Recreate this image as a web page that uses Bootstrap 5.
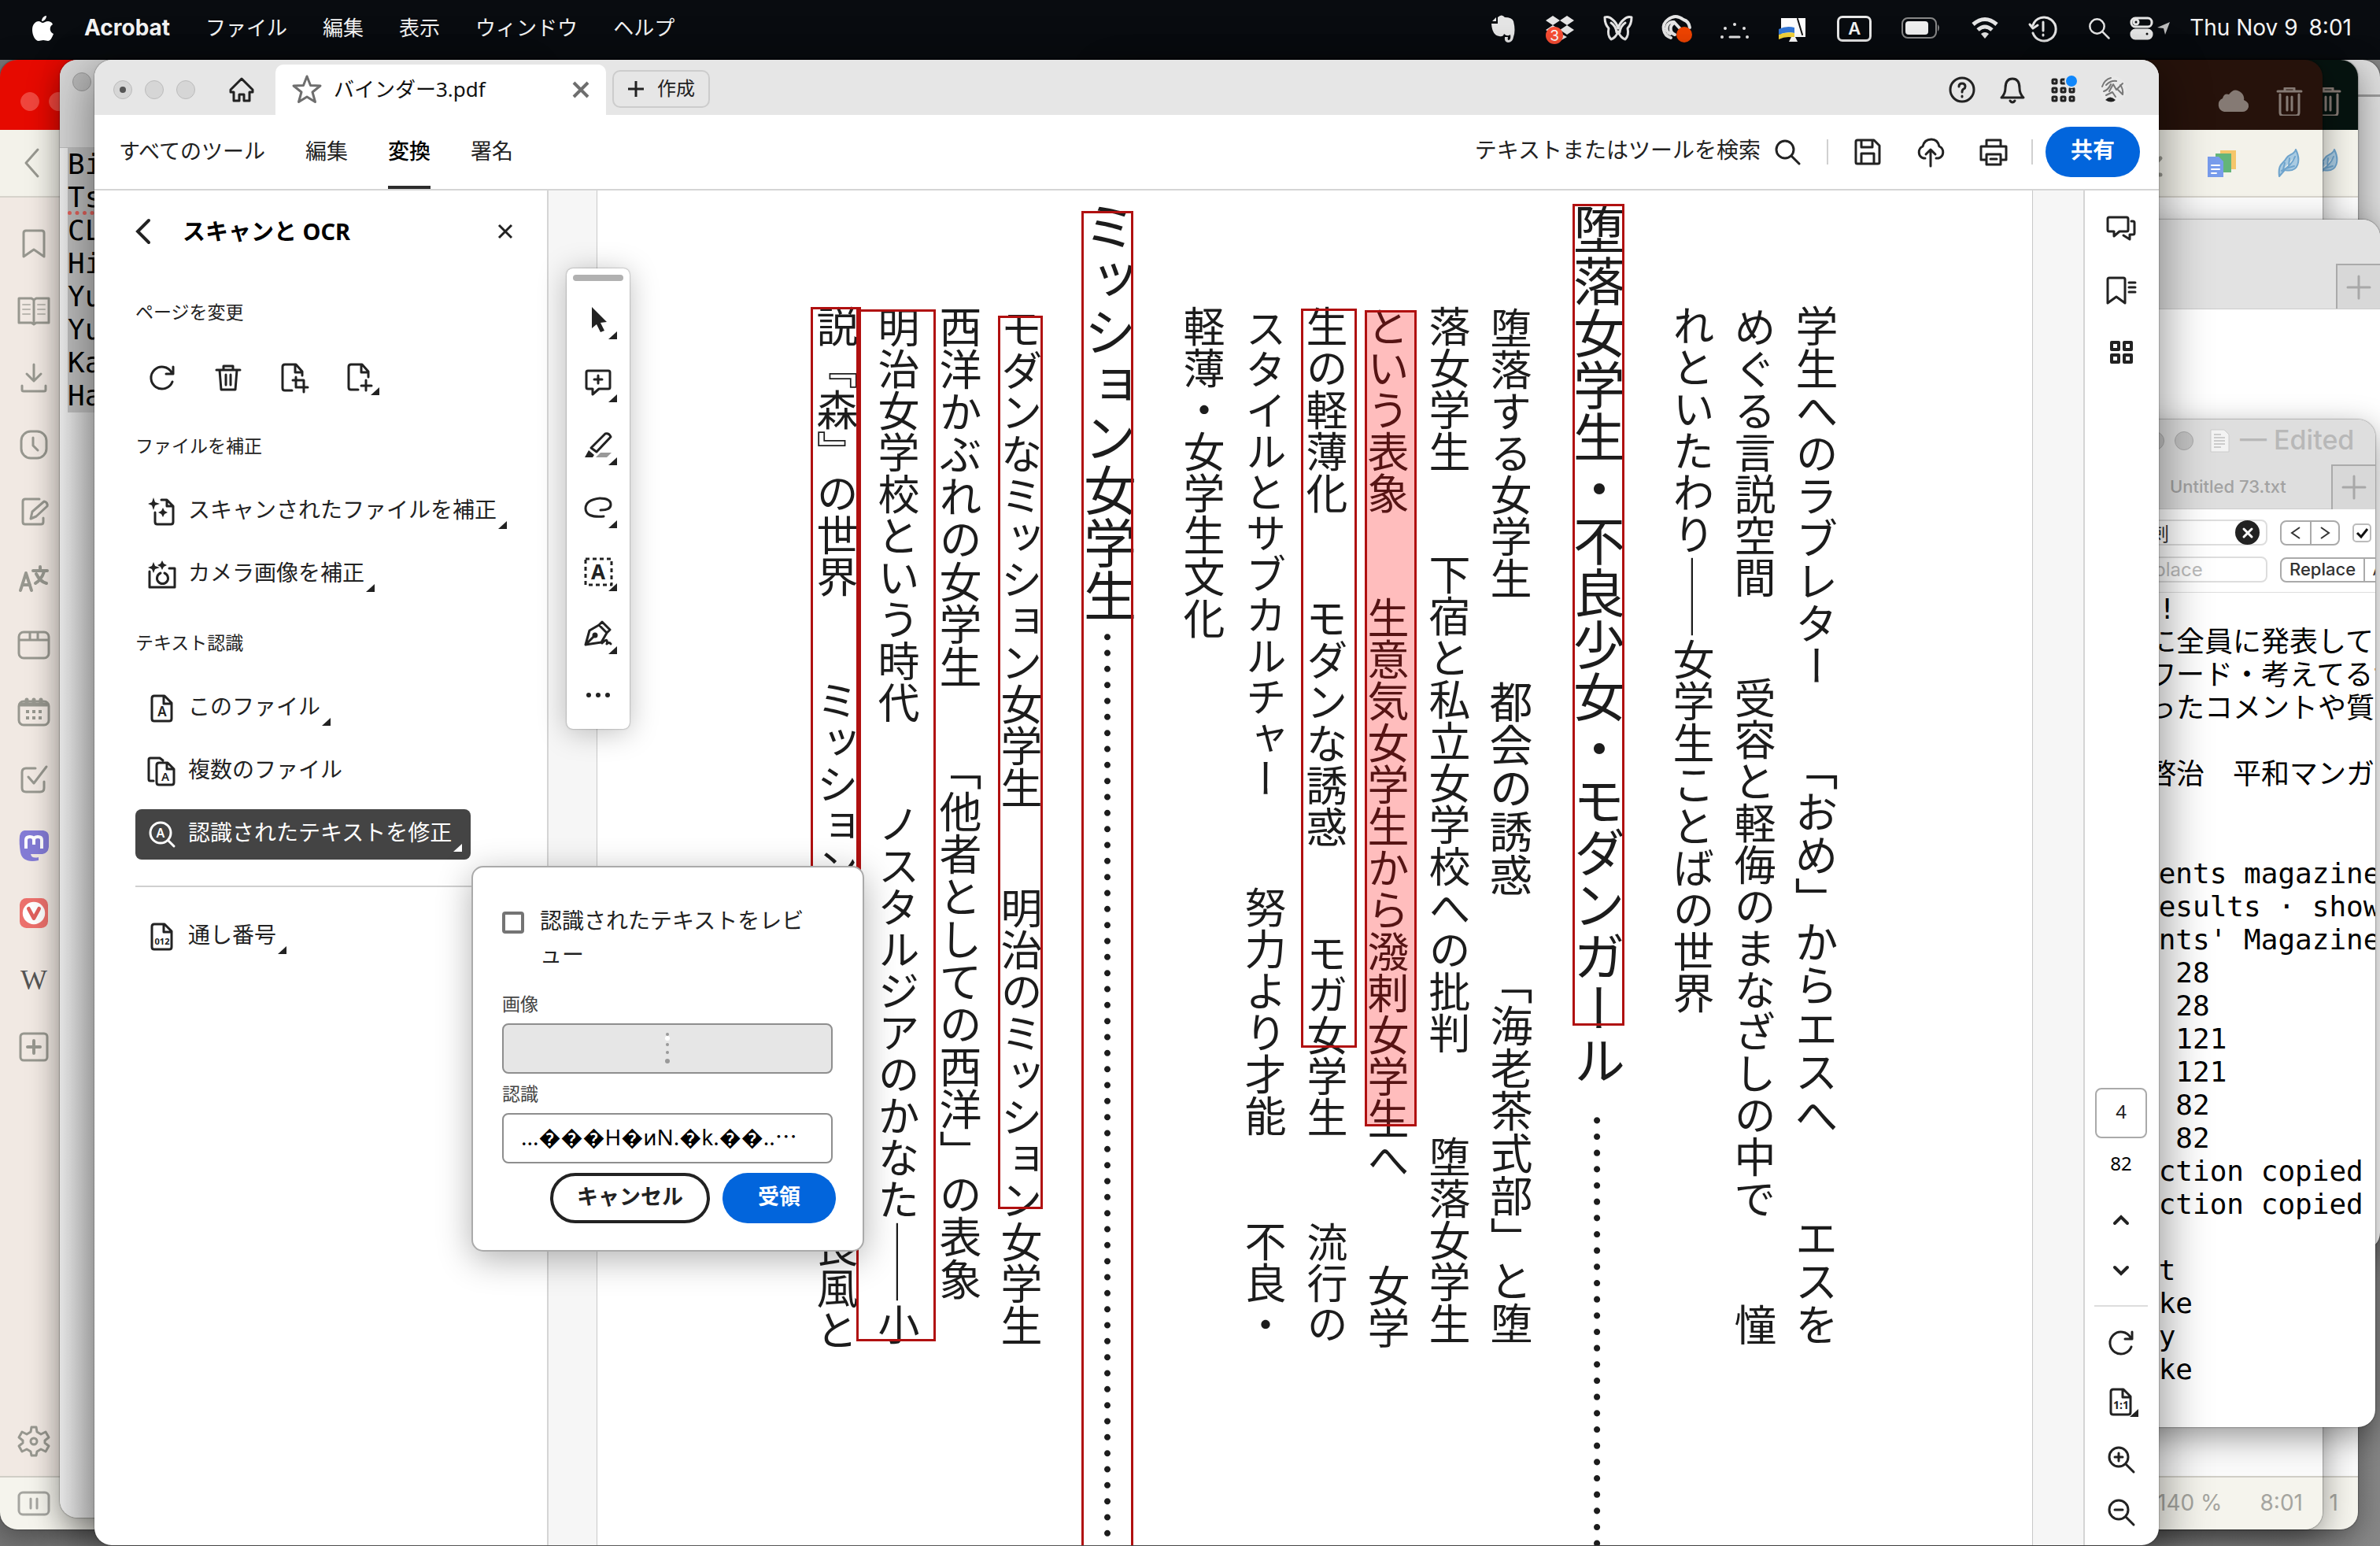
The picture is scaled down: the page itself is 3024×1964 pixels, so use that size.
<!DOCTYPE html>
<html lang="ja">
<head>
<meta charset="utf-8">
<meta name="viewport" content="width=device-width, initial-scale=1">
<title>バインダー3.pdf</title>
<link href="https://cdn.jsdelivr.net/npm/bootstrap@5.3.0/dist/css/bootstrap.min.css" rel="stylesheet">
<style>
:root{--jp:"Noto Sans","Noto Sans CJK JP",sans-serif;--mac:Inter,"Noto Sans CJK JP",sans-serif;--mono:"DejaVu Sans Mono","Noto Sans CJK JP",monospace}
html{font-size:16px}
body{font-family:var(--jp);font-size:28px;line-height:1.2;color:#222;background:linear-gradient(90deg,#777,#b9b9b9 20%,#888);text-spacing-trim:space-all}
svg{display:block;flex:none;overflow:visible}
.ic{width:36px;height:36px;fill:none;stroke:currentColor;stroke-width:3;stroke-linecap:round;stroke-linejoin:round}
.plain{background:none;border:0;padding:0;color:inherit;font:inherit;display:flex;align-items:center;justify-content:center}
/* menu bar */
.macbar{height:76px;background:#090c10;color:#f4f4f4;font-family:var(--mac);font-size:26px;padding:0 36px 4px 40px}
.macbar a{color:inherit;text-decoration:none}
.macmenu{gap:45px}
.macmenu .appname{font-size:28px;margin-left:-6px}
.trayset{gap:38px}
.trayset .lastset{gap:24px}
.trayset .clock{font-size:28px}
.trayset .ic{stroke-width:3;color:#e6e6e6}
.keycap{width:44px;height:33px;border:3px solid #e8e8e8;border-radius:7px;font-size:22px;line-height:27px;text-align:center;font-weight:600}
/* desktop */
.desk{min-height:0}
.win{position:absolute;overflow:hidden;border-radius:22px;box-shadow:0 0 2px rgba(0,0,0,.7),0 12px 40px rgba(0,0,0,.4)}
.w-far{left:2600px;right:0;top:0;bottom:60%;background:#dcdcdc}
.w-far hr{margin:44px 0 0;border-top:3px solid #999;opacity:1}
.w-green{left:1400px;right:28px;top:0;bottom:21px}
.w-red{left:0;right:73px;top:0;bottom:21px}
.vhead{height:89px;padding:16px 24px 0 0;gap:32px;color:#857a74;flex-shrink:0}
.w-green .vhead{background:#06130f}
.w-red .vhead{background:linear-gradient(90deg,#e60a00 3%,#7c1208 50%,#26120b 92%);padding-left:26px}
.vtool{height:86px;background:#f3f2ea;border-bottom:2px solid #d6d3cb;padding:0 24px 0 26px;color:#97978f;gap:50px;flex-shrink:0}
.w-green .vtool,.w-green .vhead{padding-right:20px}
.vbody{background:#fafafa;min-height:0}
.vside{width:86px;background:#f1e9e3;color:#97978f;padding:16px 0 0}
.vside .plain{height:85px;flex:none}
.vside .plain:last-child{height:88px;margin-top:auto}
.vfoot{height:68px;border-top:2px solid #d0cec6;background:#f5f4ed;color:#a5a5a0;font-family:var(--mac);font-size:28px;padding:0 25px;gap:48px;flex-shrink:0}
.lampoff{width:24px;height:24px;border-radius:50%;border:1px solid #bbb;background:#d6d6d6;flex:none}
.w-red .lampoff{background:#f0463d;border-color:#f0463d}
.w-note{left:76px;width:600px;top:0;bottom:36px;background:linear-gradient(90deg,#ececec,#d0d0d0 44px)}
.w-note header{height:112px;background:#d4d4d4;border-bottom:1px solid #bbb;padding:16px}
.w-note .lampoff{background:#b9b9b9;border-color:#999}
.w-note pre,.w-edit pre{font-family:var(--mono);font-size:36px;line-height:42px;color:#000;margin:0;overflow:hidden}
.w-note pre{margin-left:10px;background:#bdbdbd}
.w-note u{text-decoration:underline dotted #e0605a 5px;text-underline-offset:5px}
.w-back{left:2600px;right:0;top:203px;bottom:376px;background:#fff}
.w-back header{height:114px;background:#e2e2e2;border-bottom:1px solid #ccc}
.plustab{width:56px;height:57px;background:#d8d8d8;border-left:2px solid #aaa;border-top:2px solid #aaa;color:#a8a8a8}
.w-edit{left:2600px;right:6px;top:457px;bottom:151px;background:#fff;font-family:var(--mac)}
.w-edit .titlerow{height:57px;background:#dedede;color:#b8b8b8;font-size:34px;padding:0 0 4px 126px;gap:13px;font-weight:500}
.w-edit .lampoff{border-color:#aaa;background:#c4c4c4}
.w-edit .tabrow{height:57px;background:#dedede;border-bottom:1px solid #ccc;color:#a2a2a2;font-size:22px;padding-left:157px;font-weight:500}
.findbox{padding:13px 0 11px 40px;height:106px;border-bottom:1px solid #ddd;font-size:22px;gap:14px;color:#333}
.findbox input[type=text]{width:241px;height:33px;border:2px solid #ddd;border-radius:8px;font-size:24px;padding:0 0 0 66px;color:#333}
.findbox input::placeholder{color:#bbb;opacity:1}
.clearx{position:absolute;right:10px;top:1px;width:31px;height:31px;border-radius:50%;background:#222;color:#fff}
.seg2{border:2px solid #aaa;border-radius:8px;height:32px;overflow:hidden;flex:none}
.seg2 .plain{width:36px}
.seg2 .plain+.plain{border-left:2px solid #aaa}
.seg2 .wide{width:104px;font-weight:500}
.w-edit .cjk{padding-left:129px}
.w-edit .lat{padding-left:121px}
/* Acrobat window */
.w-acro{left:120px;right:281px;top:0;bottom:1px;background:#fff;box-shadow:0 0 2px rgba(0,0,0,.6),0 16px 60px 6px rgba(0,0,0,.42)}
.tabbar{height:70px;background:#e6e6e6;padding:6px 40px 0 24px;flex-shrink:0}
.tabbar .lampoff{margin-right:16px}
.tabbar .lampoff i{display:block;width:8px;height:8px;border-radius:50%;background:#555;margin:7px}
.homebtn{width:86px}
.doctab{width:420px;background:#fff;border-radius:10px 10px 0 0;padding:0 21px 0 22px;font-size:26px;color:#111}
.newbtn{height:48px;width:124px;border:2px solid #ccc;border-radius:10px;margin:0 0 3px 8px;gap:16px;font-size:24px}
.toolbar{height:96px;border-bottom:2px solid #d5d5d5;padding:0 24px 0 31px;flex-shrink:0}
.toolbar nav{gap:51px;font-size:27px}
.toolbar nav a{color:#222;text-decoration:none;height:94px;display:flex;align-items:center;padding-bottom:2px}
.toolbar nav a.here{box-shadow:inset 0 -4px #2c2c2c;color:#000;font-weight:500}
.tools3{gap:44px;margin:0 30px 0 24px}
.vrule{width:2px;height:32px;background:#d0d0d0}
.sharebtn{background:#0265dc;color:#fff;border:0;border-radius:32px;width:120px;height:64px;font-size:28px;font-weight:700;padding:0 0 4px}
.panel{width:577px;border-right:2px solid #d5d5d5;padding:0 44px 0 52px;flex:none}
.ptitle{height:104px}
.ptitle h1{font-size:29px;font-weight:700;margin:0 auto 0 38px;color:#000}
.plabel{font-size:23px;line-height:34px;height:34px;margin:37px 0 35px;font-weight:400}
.ptitle+.plabel{margin-top:33px}
.pitem{position:relative;height:64px;padding:0 24px 4px 16px;gap:15px;border-radius:8px;white-space:nowrap;margin-bottom:16px}
.pitem .ic{margin-top:4px}
.pitem.lit{background:#444;color:#fff}
.more::after{content:"";position:absolute;right:11px;bottom:10px;border-left:11px solid transparent;border-bottom:10px solid currentColor}
.panel hr{margin:33px 0 31px;border-top:2px solid #d0d0d0;opacity:1}
.pacts{height:64px;gap:48px;padding-left:16px}
.pacts .plain{position:relative;height:64px}
.pacts .more::after{right:-6px;bottom:10px}
.gutter{background:#f6f6f6;width:62px;flex:none;border-right:1px solid #c9c9c9}
.gutter.end{width:67px;border-left:1px solid #c9c9c9;border-right:2px solid #d5d5d5}
.sheet{position:relative;overflow:hidden;background:#fff;min-width:0}
.vtext{writing-mode:vertical-rl;height:100%;padding-right:235px;font-family:"Noto Sans CJK JP",sans-serif;color:#1c1c1c;margin-left:auto}
.vtext p{display:flex;block-size:78px;margin:0;line-height:78px;white-space:nowrap}
.vtext p.hd{block-size:154px;line-height:146px;padding-right:8px}
.vtext span{flex:none}
.s52{font-size:52px}.s53{font-size:53px}.s54{font-size:54px}.s55{font-size:55px}.s61{font-size:61px}.s62{font-size:62px}.s66{font-size:66px}.s67{font-size:67px}
.ocrbox{position:absolute;border:3px solid #b01010;padding:0;background:none}
.ocrbox.hot{background:rgba(255,0,0,.26)}
.floatbar{position:absolute;left:600px;top:265px;width:80px;height:585px;background:#fff;border-radius:8px;box-shadow:0 0 2px rgba(0,0,0,.5),0 4px 36px rgba(0,0,0,.25);padding-top:8px}
.floatbar .grip{width:64px;height:8px;border-radius:4px;background:#b1b1b1;margin:0 auto 9px}
.floatbar .plain{position:relative;width:80px;height:80px}
.floatbar .more::after{right:16px;bottom:15px}
.rail{width:94px;flex:none;padding:10px 2px 10px 0}
.rail .plain{width:92px;height:78px}
.rail .h64{height:64px}
.rail .h75{height:75px;position:relative}
.rail .h71{height:71px}
.rail input{width:66px;height:64px;border:2px solid #aaa;border-radius:8px;text-align:center;font-size:24px;color:#222;padding-bottom:6px}
.rail .total{font-size:24px;height:72px;line-height:64px;color:#000}
.rail hr{width:68px;border-top:2px solid #ddd;opacity:1;margin:12px 0 8px}
.rail .more::after{right:24px;bottom:18px}
.pop{position:absolute;left:479px;top:1024px;width:499px;background:#fff;border:2px solid #aaa;border-radius:15px;box-shadow:0 10px 44px rgba(0,0,0,.3);padding:44px 34px 34px 37px}
.pop .ck{appearance:none;width:28px;height:28px;border:4px solid #747474;border-radius:4px;margin:12px 20px 0 0;flex:none}
.pop .cklabel{line-height:43px;width:350px;word-break:break-all;padding-top:2px}
.pop .flabel{display:block;font-size:23px;line-height:34px;color:#444}
.pop .fbox{display:block;width:420px;height:64px;border:2px solid #8e8e8e;border-radius:8px;font-size:28px;padding:0 22px 6px}
.pop .imgbox{background:#e6e6e6;padding:7px 0 0;display:flex;justify-content:center}
.pop .pills{gap:16px;margin:12px 0 0}
.pill{height:64px;border-radius:32px;font-size:27px;font-weight:700;padding:0 0 4px}
.pill.no{border:4px solid #222;background:#fff;width:203px;color:#222}
.pill.yes{border:0;background:#0265dc;color:#fff;width:144px}
</style>
<script src="https://cdn.jsdelivr.net/npm/bootstrap@5.3.0/dist/js/bootstrap.bundle.min.js"></script>
</head>
<body class="vh-100 d-flex flex-column overflow-hidden">
<svg width="0" height="0" class="position-absolute" aria-hidden="true"><defs>
<symbol id="magn" viewBox="0 0 36 36"><circle cx="15" cy="15" r="11"/><path d="M23 23l10 10"/></symbol>
<symbol id="trash" viewBox="0 0 36 36"><path d="M3 8h30M12 8V3h12v5M7 8l2 25h18l2-25M15 14v13M21 14v13"/></symbol>
<symbol id="bin" viewBox="0 0 36 36"><path d="M3 5h30M12 4V1h12v3M6 9v23q0 4 4 4h16q4 0 4-4V9M15 12v17M21 12v17"/></symbol>
<symbol id="redo" viewBox="0 0 36 36"><path d="M31 23A14 14 0 1 1 30 11M32 4v9h-9"/></symbol>
<symbol id="page" viewBox="0 0 36 36"><path d="M8 2h13l9 9v20q0 3-3 3H8q-3 0-3-3V5q0-3 3-3zM20 3v9h9"/></symbol>
<symbol id="feather" viewBox="0 0 36 36"><path d="M5 35C3 18 10 20 14 12 18 6 24 8 26 1c6 12 5 30-14 26zM8 28C16 24 22 18 25 10M12 18l-2 8M18 12l-1 10M10 26l14-4" fill="#a9cbe2" stroke="#6fa4cc" stroke-width="2"/></symbol>
<symbol id="plus" viewBox="0 0 36 36"><path d="M18 4v28M4 18h28"/></symbol>
</defs></svg>

<header class="macbar d-flex align-items-center justify-content-between flex-shrink-0">
  <nav class="macmenu d-flex align-items-center">
    <svg width="28" height="34" viewBox="0 0 28 34" fill="#fff"><path d="M19 1c0 4-3 7-6 7 0-4 3-7 6-7zM14 10c2 0 4-2 7-2 2 0 5 1 6 4-5 3-4 10 1 12-2 5-4 9-7 9-2 0-4-1-6-1s-4 1-6 1C5 33 1 26 1 19 1 12 5 8 9 8c2 0 4 2 5 2z"/></svg>
    <a href="#" class="appname fw-bold">Acrobat</a><a href="#">ファイル</a><a href="#">編集</a><a href="#">表示</a><a href="#">ウィンドウ</a><a href="#">ヘルプ</a>
  </nav>
  <div class="trayset d-flex align-items-center">
    <svg class="ic" viewBox="0 0 36 36"><path d="M5 12h8V4q5-5 9 0 9 0 11 5 3 12 0 20-1 7-7 7-5-1-4-7h4q-1 4 1 4 3-1 2-7-4 3-8-1-1 4-6 3-9-1-10-16zM6 9l5-5v5z" fill="#e6e6e6" stroke="none"/></svg>
    <svg class="ic" viewBox="0 0 36 36"><path d="M9 2l9 6-9 6-9-6zM27 2l9 6-9 6-9-6zM9 14l9 6-9 6-9-6zM27 14l9 6-9 6-9-6zM18 24l9 5-9 5z" fill="#e6e6e6" stroke="none"/><circle cx="11" cy="27" r="11" fill="#fb4f35" stroke="none"/><text x="11" y="34" font-size="19" text-anchor="middle" fill="#fff" stroke="none">3</text></svg>
    <svg class="ic" viewBox="0 0 36 36"><path d="M1 4q5-2 10 3 5 4 7 11Q20 11 25 7q5-5 10-3 0 9-5 14 2 9-3 14-6-2-9-10-3 8-9 10-5-5-3-14Q1 13 1 4zM9 11q6 4 7 12M27 11q-6 4-7 12"/></svg>
    <svg class="ic" viewBox="0 0 36 36"><path d="M11 30A13 13 0 0 1 7 7q10-8 20 0 7 2 8 10M10 25a8 8 0 0 1 5-15l11 12M16 26A8 8 0 0 1 14 12" stroke-width="4"/><circle cx="28" cy="26" r="10" fill="#f04400" stroke="none"/></svg>
    <svg class="ic" viewBox="0 0 36 36" fill="none"><path d="M12 29h12" /><g fill="#e6e6e6" stroke="none"><circle cx="2" cy="29" r="2"/><circle cx="34" cy="29" r="2"/><circle cx="6" cy="18" r="2"/><circle cx="30" cy="18" r="2"/><circle cx="18" cy="13" r="2"/></g></svg>
    <svg class="ic" viewBox="0 0 36 36"><path d="M3 5h31v24H3z" fill="#fff" stroke="none"/><path d="M0 19q10-5 20-2v7q-10-2-20 2z" fill="#3377d8" stroke="none"/><path d="M0 26q10-4 20-2v6q-10-3-20 2z" fill="#f6d53c" stroke="none"/><path d="M13 35l3-6h5l3 6z" fill="#fff" stroke="none"/><path d="M24 6l6 20" stroke="#111" stroke-width="2"/></svg>
    <span class="keycap">A</span>
    <svg width="50" height="28" viewBox="0 0 50 28"><rect x="1" y="1" width="43" height="25" rx="7" fill="none" stroke="#888" stroke-width="2"/><rect x="5" y="5" width="29" height="17" rx="4" fill="#f0f0f0"/><path d="M46 9q4 4 0 9z" fill="#888"/></svg>
    <svg class="ic" viewBox="0 0 36 36"><path d="M3 13q15-13 30 0M9 20q9-8 18 0" stroke-width="5" stroke-linecap="butt"/><path d="M18 31l-5-6q5-4 10 0z" fill="#e6e6e6" stroke="none"/></svg>
    <svg class="ic" viewBox="0 0 36 36"><path d="M5 14a15 15 0 1 1 0 10M1 13l4 5 6-4M18 10v11M18 26v1"/></svg>
    <div class="lastset d-flex align-items-center">
      <svg class="ic" style="width:30px"><use href="#magn"/></svg>
      <div class="d-flex align-items-center gap-1">
      <svg width="30" height="30" viewBox="0 0 30 30" fill="none" stroke="#e6e6e6" stroke-width="3"><rect x="2" y="2" width="26" height="11" rx="5"/><circle cx="8" cy="7" r="3"/><rect x="2" y="17" width="26" height="11" rx="5" fill="#e6e6e6"/><circle cx="22" cy="22" r="3" fill="#111"/></svg>
      <svg width="18" height="18" viewBox="0 0 18 18" fill="#bbb"><path d="M17 1l-6 16-2-8-8-1z"/></svg></div>
      <span class="clock">Thu Nov 9&ensp;8:01</span>
    </div>
  </div>
</header>

<main class="desk flex-grow-1 position-relative">
  <div class="win w-far"><hr></div>

  <section class="win w-green d-flex flex-column">
    <div class="vhead d-flex align-items-center justify-content-end"><svg class="ic"><use href="#bin"/></svg></div>
    <div class="vtool d-flex align-items-center justify-content-end"><svg class="ic"><use href="#feather"/></svg></div>
    <div class="vbody flex-grow-1"></div>
    <div class="vfoot d-flex align-items-center justify-content-end">1</div>
  </section>

  <section class="win w-red d-flex flex-column">
    <div class="vhead d-flex align-items-center">
      <div class="d-flex gap-2 me-auto"><i class="lampoff"></i><i class="lampoff ms-1"></i></div>
      <svg width="42" height="30" viewBox="0 0 42 30" fill="currentColor"><path d="M9 28a9 9 0 0 1-2-17q2-7 8-5 7-10 16-2 4 4 3 9 7 3 6 9-2 6-8 6z"/></svg>
      <svg class="ic"><use href="#bin"/></svg>
    </div>
    <div class="vtool d-flex align-items-center">
      <svg class="ic me-auto" style="width:30px" viewBox="0 0 30 36"><path d="M22 1L7 18l15 17"/></svg>
      <svg class="ic" viewBox="0 0 36 36"><path d="M26 12L10 28M4 33h22" stroke-width="5"/></svg>
      <svg class="ic" viewBox="0 0 36 36" stroke="none"><path d="M16 2h20v24H16z" fill="#f5c66a" stroke="none"/><path d="M10 6h20v24H10z" fill="#64b57a" stroke="none"/><path d="M0 10h14l6 6v20H0z" fill="#789cec" stroke="none"/><path d="M5 21h10M5 26h10M5 31h6" stroke="#fff" stroke-width="2"/></svg>
      <svg class="ic"><use href="#feather"/></svg>
    </div>
    <div class="vbody flex-grow-1 d-flex">
      <aside class="vside d-flex flex-column">
        <button class="plain" aria-label="Bookmarks"><svg class="ic" viewBox="0 0 36 36"><path d="M8 1h20q3 0 3 3v30l-13-9-13 9V4q0-3 3-3z" stroke-width="3"/></svg></button>
        <button class="plain" aria-label="Reading list"><svg class="ic" viewBox="0 0 36 36"><path d="M-1 2h16l3 2 3-2h16v31H21l-3 2-3-2H-1zM18 4v30"/><path d="M4 10h9M4 16h9M4 22h9M23 10h9M23 16h9M23 22h9" stroke-width="2" opacity=".6"/></svg></button>
        <button class="plain" aria-label="Downloads"><svg class="ic" viewBox="0 0 36 36"><path d="M18 1v20M9 13l9 9 9-9M3 28v5q0 2 2 2h26q2 0 2-2v-5" stroke-width="3"/></svg></button>
        <button class="plain" aria-label="History"><svg class="ic" viewBox="0 0 36 36"><rect x="2" y="1" width="32" height="34" rx="12"/><path d="M17 9v10l6 6"/></svg></button>
        <button class="plain" aria-label="Notes"><svg class="ic" viewBox="0 0 36 36"><path d="M25 2H7Q4 2 4 5v26q0 3 3 3h20q3 0 3-3v-5M14 27l2-9L31 5q5 1 4 6L21 24z"/></svg></button>
        <button class="plain" aria-label="Translate"><svg class="ic" viewBox="0 0 36 36"><path d="M1 33l7-22 7 22M4 26h9M17 8h18M26 3v5M31 9q-3 10-11 15M21 12q5 10 13 12" stroke-width="4"/></svg></button>
        <button class="plain" aria-label="Window"><svg class="ic" viewBox="0 0 36 36"><rect x="-1" y="1" width="38" height="33" rx="6"/><path d="M0 11h36M13 2v8M23 2v8"/></svg></button>
        <button class="plain" aria-label="Calendar"><svg class="ic" viewBox="0 0 36 36"><rect x="-1" y="4" width="38" height="30" rx="6"/><path d="M1 8h34M9 2v3M18 2v3M27 2v3" stroke-width="5"/><path d="M8 17h4M16 17h4M24 17h4M8 25h4M16 25h4M24 25h4" stroke-width="4" stroke-linecap="butt"/></svg></button>
        <button class="plain" aria-label="Tasks"><svg class="ic" viewBox="0 0 36 36"><path d="M20 4H8Q3 4 3 9v20q0 5 5 5h18q5 0 5-5v-8M11 15l7 8L34 2"/></svg></button>
        <button class="plain" aria-label="Mastodon"><svg class="ic" style="height:40px" viewBox="0 0 36 40"><path d="M6 0h24q7 1 7 8v13q-1 8-8 9H14q1 6 10 4v4Q4 42 1 28-1 16 0 7q1-6 6-7z" fill="#837bd5" stroke="none"/><path d="M8 23V12q0-4 5-4t5 4v6M18 12q0-4 5-4t5 4v11" stroke="#fff" stroke-width="4" stroke-linecap="butt"/></svg></button>
        <button class="plain" aria-label="Vivaldi"><svg class="ic" style="height:40px" viewBox="0 0 38 40"><rect width="38" height="40" rx="9" fill="#ec706c" stroke="none"/><circle cx="19" cy="20" r="15" fill="#fff" stroke="none"/><path d="M12 14l7 13 7-13" stroke="#e0605d" stroke-width="5"/></svg></button>
        <button class="plain" aria-label="Wikipedia"><svg class="ic" viewBox="0 0 36 36"><text x="18" y="30" font-size="36" text-anchor="middle" font-family="Liberation Serif,serif" fill="#555" stroke="none">W</text></svg></button>
        <button class="plain" aria-label="Add"><svg class="ic" viewBox="0 0 36 36"><rect x="1" y="1" width="34" height="34" rx="4"/><path d="M18 10v16M10 18h16" stroke-width="4"/></svg></button>
        <button class="plain" aria-label="Settings"><svg class="ic" viewBox="0 0 36 36"><path d="M15 0h6l1 6 5 3 6-3 4 7-5 4v3l5 4-4 7-6-3-5 3-1 5h-6l-1-5-5-3-6 3-4-7 5-4v-3l-5-4 4-7 6 3 5-3z"/><circle cx="18" cy="18" r="4"/></svg></button>
      </aside>
    </div>
    <div class="vfoot d-flex align-items-center"><svg class="ic me-auto" viewBox="0 0 36 36"><rect x="-1" y="4" width="38" height="28" rx="5"/><path d="M14 12v12M22 12v12"/></svg><span>140 %</span><span>8:01</span></div>
  </section>

  <section class="win w-back"><header class="d-flex justify-content-end align-items-end"><button class="plain plustab" aria-label="New tab"><svg class="ic"><use href="#plus"/></svg></button></header></section>

  <section class="win w-note">
    <header><i class="lampoff d-block"></i></header>
<pre>Bi
<u>Ts</u>
CL
Hi
Yu
Yu
Ka
Ha</pre>
  </section>

  <section class="win w-edit">
    <div class="titlerow d-flex align-items-center"><i class="lampoff"></i><i class="lampoff me-2"></i>
      <svg width="25" height="30" viewBox="0 0 25 30"><path d="M1 1h17l6 6v22H1z" fill="#f3f3f3" stroke="#ccc"/><path d="M5 7h9M5 11h14M5 15h14M5 19h14M5 23h9" stroke="#ccc" stroke-width="2"/></svg>
      <span>— Edited</span></div>
    <div class="tabrow d-flex align-items-center justify-content-between"><span>Untitled 73.txt</span><button class="plain plustab" aria-label="New tab"><svg class="ic"><use href="#plus"/></svg></button></div>
    <div class="findbox d-flex flex-column">
      <div class="d-flex align-items-center gap-3">
        <div class="position-relative"><input type="text" value="　剌" aria-label="Find"><button class="plain clearx" aria-label="Clear"><svg class="ic" style="width:16px" viewBox="0 0 16 16"><path d="M3 3l10 10M13 3L3 13"/></svg></button></div>
        <div class="seg2 d-flex"><button class="plain" aria-label="Previous"><svg width="14" height="18" fill="none" stroke="#333" stroke-width="2"><path d="M12 2L2 9l10 7"/></svg></button><button class="plain" aria-label="Next"><svg width="14" height="18" fill="none" stroke="#333" stroke-width="2"><path d="M2 2l10 7-10 7"/></svg></button></div>
        <input type="checkbox" class="form-check-input m-0 flex-shrink-0 bg-white" checked aria-label="Replace" hidden>
        <svg width="24" height="24" viewBox="0 0 24 24" fill="none"><rect x="1" y="1" width="22" height="22" rx="4" stroke="#bbb" stroke-width="2"/><path d="M6 12l5 5 8-10" stroke="#111" stroke-width="3"/></svg>
      </div>
      <div class="d-flex align-items-center gap-3">
        <input type="text" placeholder="Replace" aria-label="Replacement">
        <div class="seg2 d-flex"><button class="plain wide">Replace</button><button class="plain">A</button></div>
      </div>
    </div>
<pre class="lat"> !</pre>
<pre class="cjk">に全員に発表して・
ワード・考えてるサ
ったコメントや質

啓治　平和マンガー

</pre>
<pre class="lat">

dents magazine
results · show
ents' Magazine
  28
  28
  121
  121
  82
  82
ection copied
ection copied

 t
 ke
 y
 ke</pre>
  </section>

  <section class="win w-acro d-flex flex-column">
    <div class="tabbar d-flex align-items-stretch">
      <div class="d-flex align-items-center"><span class="lampoff"><i></i></span><span class="lampoff"></span><span class="lampoff"></span></div>
      <button class="plain homebtn" aria-label="ホーム"><svg class="ic" viewBox="0 0 36 36"><path d="M18 4L4 18v3h4v11h7v-8h6v8h7V21h4v-3z"/></svg></button>
      <div class="doctab d-flex align-items-center">
        <svg class="ic me-3" viewBox="0 0 36 36" style="color:#6e6e6e"><path d="M18 1l4.500 11.500 12.500.500-10 8 3.500 12.500L18 27 7.500 33.500 11 21 1 13l12.500-.500z"/></svg>
        <span class="me-auto">バインダー3.pdf</span>
        <button class="plain" aria-label="閉じる"><svg width="22" height="22" viewBox="0 0 22 22" stroke="#6e6e6e" stroke-width="4"><path d="M2 2l18 18M20 2L2 20"/></svg></button>
      </div>
      <button class="plain newbtn align-self-center"><svg width="22" height="22" stroke="#222" stroke-width="3"><path d="M11 1v20M1 11h20"/></svg>作成</button>
      <div class="d-flex align-items-center ms-auto gap-4">
        <button class="plain me-1" aria-label="ヘルプ"><svg class="ic" viewBox="0 0 36 36"><circle cx="18" cy="18" r="15"/><path d="M14 14q0-4 4-4t4 4q0 2-2 3t-2 4M18 26v1"/></svg></button>
        <button class="plain me-1" aria-label="通知"><svg class="ic" viewBox="0 0 36 36"><path d="M4 28q5-5 5-12 0-12 9-12t9 12q0 7 5 12zM15 32q3 4 6 0"/></svg></button>
        <button class="plain me-1" aria-label="アプリ"><svg class="ic" viewBox="0 0 36 36"><g stroke-width="3"><rect x="5" y="5" width="5" height="5" rx="1"/><rect x="16" y="5" width="5" height="5" rx="1"/><rect x="5" y="16" width="5" height="5" rx="1"/><rect x="16" y="16" width="5" height="5" rx="1"/><rect x="27" y="16" width="5" height="5" rx="1"/><rect x="5" y="27" width="5" height="5" rx="1"/><rect x="16" y="27" width="5" height="5" rx="1"/><rect x="27" y="27" width="5" height="5" rx="1"/></g><circle cx="29" cy="7" r="8" fill="#1087fb" stroke="#e6e6e6" stroke-width="2"/></svg></button>
        <svg class="ic" viewBox="0 0 36 36"><circle cx="18" cy="18" r="17" fill="#e9e9e9" stroke="none"/><path d="M4 14q3-9 11-11M9 12q6-6 13-5M6 20q6-2 9-9M13 20l5-9 4 7 8-8M9 25l8-4 4 6M24 18l6 6M27 12q4 5 3 12" stroke="#777" stroke-width="2"/><path d="M8 31q6-7 13 0-5 5-13 0z" fill="#222" stroke="none"/></svg>
      </div>
    </div>

    <div class="toolbar d-flex align-items-center justify-content-between">
      <nav class="d-flex"><a href="#">すべてのツール</a><a href="#">編集</a><a href="#" class="here">変換</a><a href="#">署名</a></nav>
      <div class="d-flex align-items-center">
        <button class="plain pb-1">テキストまたはツールを検索</button>
        <svg class="ic ms-3 me-4"><use href="#magn"/></svg>
        <span class="vrule mx-2"></span>
        <div class="tools3 d-flex">
        <button class="plain" aria-label="保存"><svg class="ic" viewBox="0 0 36 36"><path d="M3 5q0-2 2-2h21l7 7v21q0 2-2 2H5q-2 0-2-2zM10 3v9h14V3M10 33V20h16v13"/></svg></button>
        <button class="plain" aria-label="アップロード"><svg class="ic" viewBox="0 0 36 36"><path d="M11 26H9A8 8 0 0 1 8 11q2-9 11-9 8 0 10 9a8 8 0 0 1-1 15h-3M18 36V15M12 21l6-6 6 6"/></svg></button>
        <button class="plain" aria-label="印刷"><svg class="ic" viewBox="0 0 36 36"><path d="M9 11V3h18v8M9 28H2V11h32v17h-7M9 21h18v13H9zM14 27h8"/></svg></button>
        </div>
        <span class="vrule me-3"></span>
        <button class="sharebtn">共有</button>
      </div>
    </div>

    <div class="d-flex flex-grow-1 overflow-hidden">
      <aside class="panel">
        <div class="ptitle d-flex align-items-center">
          <button class="plain" aria-label="戻る"><svg width="22" height="34" viewBox="0 0 22 34" fill="none" stroke="#222" stroke-width="4" stroke-linecap="round"><path d="M17 3L3 17l14 14"/></svg></button>
          <h1>スキャンと OCR</h1>
          <button class="plain" aria-label="閉じる"><svg width="18" height="18" stroke="#222" stroke-width="3"><path d="M1 1l16 16M17 1L1 17"/></svg></button>
        </div>
        <h2 class="plabel">ページを変更</h2>
        <div class="pacts d-flex">
          <button class="plain" aria-label="回転"><svg class="ic"><use href="#redo"/></svg></button>
          <button class="plain" aria-label="削除"><svg class="ic"><use href="#trash"/></svg></button>
          <button class="plain" aria-label="トリミング"><svg class="ic" viewBox="0 0 36 36"><path d="M15 34H6q-3 0-3-3V4q0-3 3-3h14l8 9v5M19 2v9h8M20 17v13h15M16 21h14v15"/></svg></button>
          <button class="plain more" aria-label="挿入"><svg class="ic" viewBox="0 0 36 36"><path d="M15 33H6q-3 0-3-3V4q0-3 3-3h14l8 9v7M19 2v9h8M25 21v13M19 28h13"/></svg></button>
        </div>
        <h2 class="plabel">ファイルを補正</h2>
        <button class="plain pitem more"><svg class="ic" viewBox="0 0 36 36"><path d="M17 3h7l8 8v20q0 3-3 3H12q-3 0-3-3V19M24 3v8h8"/><path d="M7 0l2 6 6 2-6 2-2 6-2-6-5-2 5-2zM19 13l2 4 4 2-4 2-2 4-2-4-4-2 4-2z" fill="currentColor" stroke="none"/></svg>スキャンされたファイルを補正</button>
        <button class="plain pitem more"><svg class="ic" viewBox="0 0 36 36"><path d="M2 14v20h32V10h-7"/><path d="M16 16a7 7 0 1 0 5 0"/><path d="M7 2l2 5 6 2-6 2-2 5-2-5-5-2 5-2zM18 0l2 4 4 2-4 2-2 4-2-4-4-2 4-2z" fill="currentColor" stroke="none"/></svg>カメラ画像を補正</button>
        <h2 class="plabel">テキスト認識</h2>
        <button class="plain pitem more"><svg class="ic" viewBox="0 0 36 36"><use href="#page"/><text x="18" y="28" font-size="17" font-weight="600" text-anchor="middle" fill="currentColor" stroke="none">A</text></svg>このファイル</button>
        <button class="plain pitem"><svg class="ic" viewBox="0 0 36 36"><path d="M7 30H3q-2 0-2-2V3q0-2 2-2h12l4 3M14 7h11l8 8v17q0 3-3 3H14q-3 0-3-3V10q0-3 3-3zM24 8v7h8"/><text x="22" y="30" font-size="15" font-weight="600" text-anchor="middle" fill="currentColor" stroke="none">A</text></svg>複数のファイル</button>
        <button class="plain pitem lit more"><svg class="ic" viewBox="0 0 36 36"><circle cx="16" cy="16" r="13"/><path d="M26 26l7 7"/><text x="16" y="22" font-size="16" font-weight="600" text-anchor="middle" fill="currentColor" stroke="none">A</text></svg>認識されたテキストを修正</button>
        <hr>
        <button class="plain pitem more"><svg class="ic" viewBox="0 0 36 36"><use href="#page"/><text x="18" y="28" font-size="11" font-weight="700" text-anchor="middle" fill="currentColor" stroke="none">012</text></svg>通し番号</button>
      </aside>

      <div class="gutter"></div>
      <article class="sheet flex-grow-1"><div class="vtext" id="vtext"></div></article>
      <div class="gutter end"></div>

      <aside class="rail d-flex flex-column align-items-center">
        <button class="plain" aria-label="コメント"><svg class="ic" viewBox="0 0 36 36"><path d="M3 3h22q2 0 2 2v14q0 2-2 2H16l-7 6v-6H3q-2 0-2-2V5q0-2 2-2zM31 8h2q2 0 2 2v13q0 2-2 2h-4v6l-8-5"/></svg></button>
        <button class="plain" aria-label="しおり"><svg class="ic" viewBox="0 0 36 36"><path d="M3 2h18q2 0 2 2v30l-11-8-11 8V4q0-2 2-2zM28 8h8M28 14h8M28 20h8"/></svg></button>
        <button class="plain" aria-label="サムネール"><svg class="ic" viewBox="0 0 36 36"><path d="M6 6h9v9H6zM22 6h9v9h-9zM6 22h9v9H6zM22 22h9v9h-9z" stroke-width="4"/></svg></button>
        <input type="text" value="4" aria-label="ページ番号" class="mt-auto">
        <span class="total">82</span>
        <button class="plain h64" aria-label="前のページ"><svg width="20" height="14" fill="none" stroke="#222" stroke-width="4" stroke-linecap="round"><path d="M2 11l8-8 8 8"/></svg></button>
        <button class="plain h64" aria-label="次のページ"><svg width="20" height="14" fill="none" stroke="#222" stroke-width="4" stroke-linecap="round"><path d="M2 3l8 8 8-8"/></svg></button>
        <hr>
        <button class="plain h75" aria-label="回転"><svg class="ic"><use href="#redo"/></svg></button>
        <button class="plain h75 more" aria-label="実寸"><svg class="ic" viewBox="0 0 36 36"><use href="#page"/><text x="18" y="27" font-size="14" font-weight="700" text-anchor="middle" fill="currentColor" stroke="none">1:1</text></svg></button>
        <button class="plain h71" aria-label="拡大"><svg class="ic" viewBox="0 0 36 36"><circle cx="15" cy="15" r="12"/><path d="M24 24l10 10M15 10v10M10 15h10"/></svg></button>
        <button class="plain h64" aria-label="縮小"><svg class="ic" viewBox="0 0 36 36"><circle cx="15" cy="15" r="12"/><path d="M24 24l10 10M10 15h10"/></svg></button>
      </aside>
    </div>

    <div class="floatbar">
      <div class="grip"></div>
      <button class="plain more" aria-label="選択"><svg class="ic" viewBox="0 0 36 36"><path d="M10 2v27l6-5 5 10 5-2-5-10 8-1z" fill="#222" stroke="none"/></svg></button>
      <button class="plain more" aria-label="コメントを追加"><svg class="ic" viewBox="0 0 36 36"><path d="M5 3h26q2 0 2 2v19q0 2-2 2H19l-8 7v-7H5q-2 0-2-2V5q0-2 2-2zM18 9v10M13 14h10"/></svg></button>
      <button class="plain more" aria-label="ハイライト"><svg class="ic" viewBox="0 0 36 36"><path d="M9 21L27 3q5-1 7 4L16 26z"/><path d="M1 33l5-9 7 6-2 3z" fill="#222" stroke="none"/><path d="M15 33l6-6h14l-6 6z" fill="#999" stroke="none"/></svg></button>
      <button class="plain more" aria-label="描画"><svg class="ic" viewBox="0 0 36 36"><path d="M21 20q13 0 13-7 0-8-14-8-18 2-18 13 0 12 23 10"/></svg></button>
      <button class="plain more" aria-label="テキスト選択"><svg class="ic" viewBox="0 0 36 36"><rect x="2" y="2" width="33" height="33" stroke-dasharray="5 4" stroke-width="3" stroke-linecap="butt"/><text x="18" y="28" font-size="26" font-weight="700" text-anchor="middle" fill="#222" stroke="none">A</text></svg></button>
      <button class="plain more" aria-label="署名"><svg class="ic" viewBox="0 0 36 36"><path d="M2 31L7 13l12-7 10 10-7 12zM3 30l10-10M19 6l4-4 10 10-4 4M23 29q5-5 6-3t0 4q3-3 5 0"/><circle cx="14" cy="19" r="2" fill="#222"/></svg></button>
      <button class="plain" aria-label="その他"><svg class="ic" viewBox="0 0 36 36" ><g fill="#222" stroke="none"><circle cx="6" cy="15" r="3"/><circle cx="18" cy="15" r="3"/><circle cx="30" cy="15" r="3"/></g></svg></button>
    </div>

    <form class="pop">
      <div class="d-flex mb-4"><input class="ck" type="checkbox" id="rev"><label class="cklabel" for="rev">認識されたテキストをレビュー</label></div>
      <span class="flabel mb-2">画像</span>
      <div class="fbox imgbox"><svg width="6" height="48"><g fill="#999"><circle cx="3" cy="5" r="2"/><circle cx="3" cy="10" r="3" fill="#fff"/><circle cx="3" cy="18" r="2"/><circle cx="3" cy="28" r="2"/><circle cx="3" cy="39" r="3"/></g></svg></div>
      <label class="flabel mt-1 pt-1 mb-2" for="rec">認識</label>
      <input class="fbox" id="rec" type="text" value="...���H�ᴎN.�k.��..⋯">
      <div class="pills d-flex justify-content-end"><button type="button" class="pill no">キャンセル</button><button type="button" class="pill yes">受領</button></div>
    </form>
  </section>
</main>

<script>
/* Each column of the scanned page: [start, type size, text] runs, read from the top of the sheet. */
const TOP = 242;
const columns = [
  [[387,54,"学生へのラブレター"],[949,55,"「おめ」からエスへ"],[1545,55,"エスを"]],
  [[389,53,"めぐる言説空間"],[860,53,"受容と軽侮のまなざしの中で"],[1656,54,"憧"]],
  [[387,53,"れといたわり――女学生ことばの世界"]],
  [[258,66,"堕落女学生・不良少女・モダンガール"],[1413,62,"………………………"]],
  [[390,53,"堕落する女学生"],[864,55,"都会の誘惑"],[1222,54,"「海老茶式部」と堕"]],
  [[388,53,"落女学生"],[703,53,"下宿と私立女学校への批判"],[1443,53,"堕落女学生"]],
  [[388,53,"という表象"],[758,53,"生意気女学生から潑剌女学生へ"],[1606,54,"女学"]],
  [[388,53,"生の軽薄化"],[759,53,"モダンな誘惑"],[1185,52,"モガ女学生"],[1552,52,"流行の"]],
  [[391,52,"スタイルとサブカルチャー"],[1126,53,"努力より才能"],[1550,53,"不良・"]],
  [[388,53,"軽薄・女学生文化"]],
  [[254,67,"ミッション女学生"],[799,61,"………………………………………………………"]],
  [[391,53,"モダンなミッション女学生"],[1127,53,"明治のミッション女学生"]],
  [[388,54,"西洋かぶれの女学生"],[950,54,"「他者としての西洋」の表象"]],
  [[389,53,"明治女学校という時代"],[1020,53,"ノスタルジアのかなた――小"]],
  [[388,53,"説『森』の世界"],[863,53,"ミッション"],[1557,53,"良風と"]]
];
const host = document.getElementById("vtext");
for (const runs of columns) {
  const p = document.createElement("p");
  if (runs[0][1] > 60) p.className = "hd";
  let at = TOP;
  for (const [start, size, text] of runs) {
    const s = document.createElement("span");
    s.className = "s" + size;
    s.textContent = text;
    s.style.marginTop = (start - at) + "px";
    p.append(s);
    at = start + size * text.length;
  }
  host.append(p);
}
/* Recognised regions: distance from the sheet's right edge, top, width, height, selected. */
const regions = [[518,17,66,1044],[782,152,66,1037,1],[858,150,71,939],[1142,26,66,1740],[1257,159,57,1135],[1393,151,101,1311],[1488,148,64,1000]];
for (const [right, top, w, h, hot] of regions) {
  const b = document.createElement("button");
  b.className = "ocrbox" + (hot ? " hot" : "");
  b.setAttribute("aria-label", "認識領域");
  b.style.cssText = `right:${right}px;top:${top}px;width:${w}px;height:${h}px`;
  host.parentNode.append(b);
}
</script>
</body>
</html>
